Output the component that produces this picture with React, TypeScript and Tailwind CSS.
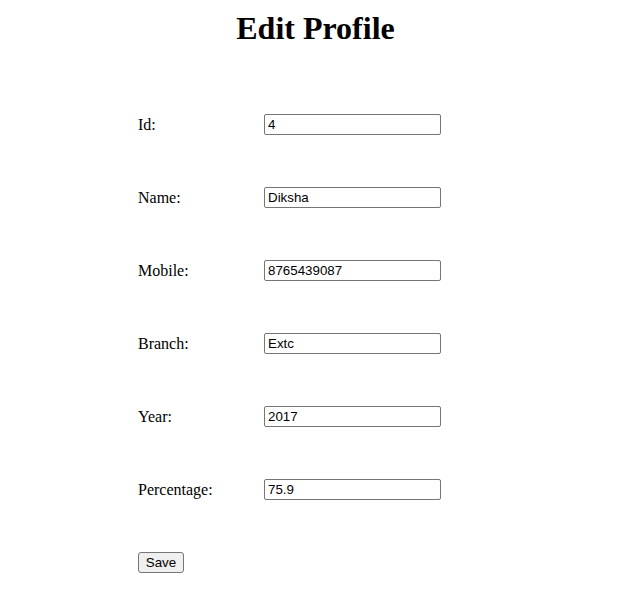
import React from "react";

const fields: [string, string][] = [
  ["Id:", "4"],
  ["Name:", "Diksha"],
  ["Mobile:", "8765439087"],
  ["Branch:", "Extc"],
  ["Year:", "2017"],
  ["Percentage:", "75.9"],
];

export default function App() {
  return (
    <div className="min-h-[601px] w-full bg-white text-black pt-[10px] font-['Liberation_Serif','Times_New_Roman',serif]">
      <h1 className="text-center text-[32px] font-bold leading-[37px] pl-[12px]">Edit Profile</h1>
      <div className="mt-[67px] pl-[138px] flex flex-col gap-[52px]">
        {fields.map(([label, value]) => (
          <div key={label} className="flex items-center h-[21px]">
            <span className="w-[126px] text-[16px] leading-[18px]">{label}</span>
            <input
              type="text"
              defaultValue={value}
              className="w-[177px] h-[21px] border border-[#767676] rounded-[2px] pl-[3px] pr-[2px] py-[1px] text-[13.333px] leading-[15px] text-black bg-white font-['Liberation_Sans',Arial,sans-serif] outline-none"
            />
          </div>
        ))}
        <div className="flex items-center h-[21px]">
          <button className="w-[46px] h-[21px] border border-[#767676] rounded-[3px] bg-[#efefef] text-[13.333px] leading-[15px] text-black font-['Liberation_Sans',Arial,sans-serif] flex items-center justify-center">
            Save
          </button>
        </div>
      </div>
    </div>
  );
}
